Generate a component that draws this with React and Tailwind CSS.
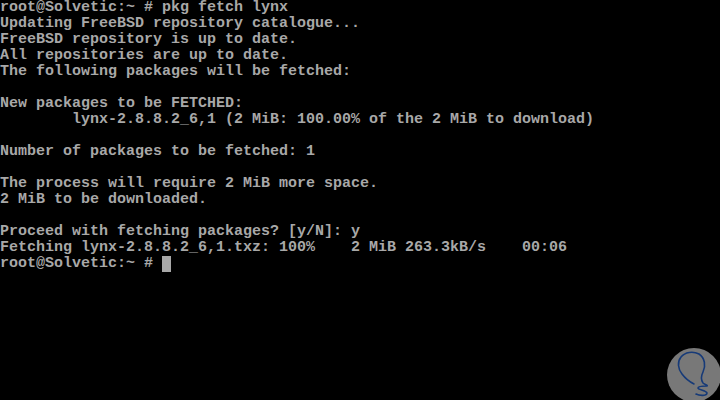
import React from 'react'

const lines = [
  'root@Solvetic:~ # pkg fetch lynx',
  'Updating FreeBSD repository catalogue...',
  'FreeBSD repository is up to date.',
  'All repositories are up to date.',
  'The following packages will be fetched:',
  '',
  'New packages to be FETCHED:',
  '        lynx-2.8.8.2_6,1 (2 MiB: 100.00% of the 2 MiB to download)',
  '',
  'Number of packages to be fetched: 1',
  '',
  'The process will require 2 MiB more space.',
  '2 MiB to be downloaded.',
  '',
  'Proceed with fetching packages? [y/N]: y',
  'Fetching lynx-2.8.8.2_6,1.txz: 100%    2 MiB 263.3kB/s    00:06',
]

function Watermark() {
  return (
    <svg className="absolute left-[660px] top-[340px]" width="60" height="60" viewBox="0 0 60 60">
      <circle cx="34" cy="35" r="27" fill="#787878" />
      <path
        d="M34 44 C30 42 25 38 22 34 C18 29 17 22 21 17 C25 12 33 11 39 14 C45 18 46 26 43 32 C41 36 41 40 43 43 C45 45 48 45 47 46 C44 46 38 46 38 48 C38 50 46 50 47 53 C47 56 40 56 36 54"
        fill="none"
        stroke="#163a78"
        strokeWidth="1.6"
        strokeLinecap="round"
      />
    </svg>
  )
}

export default function App() {
  return (
    <div className="relative w-[720px] h-[400px] bg-black overflow-hidden font-['Liberation_Mono',monospace] font-bold text-[15px] leading-4 text-[#a8a8a8]">
      {lines.map((line, i) => (
        <div key={i} className="h-4 whitespace-pre">{line}</div>
      ))}
      <div className="h-4 whitespace-pre flex">
        <span>root@Solvetic:~ # </span>
        <span className="w-[9px] h-4 bg-[#a8a8a8]" />
      </div>
      <Watermark />
    </div>
  )
}
